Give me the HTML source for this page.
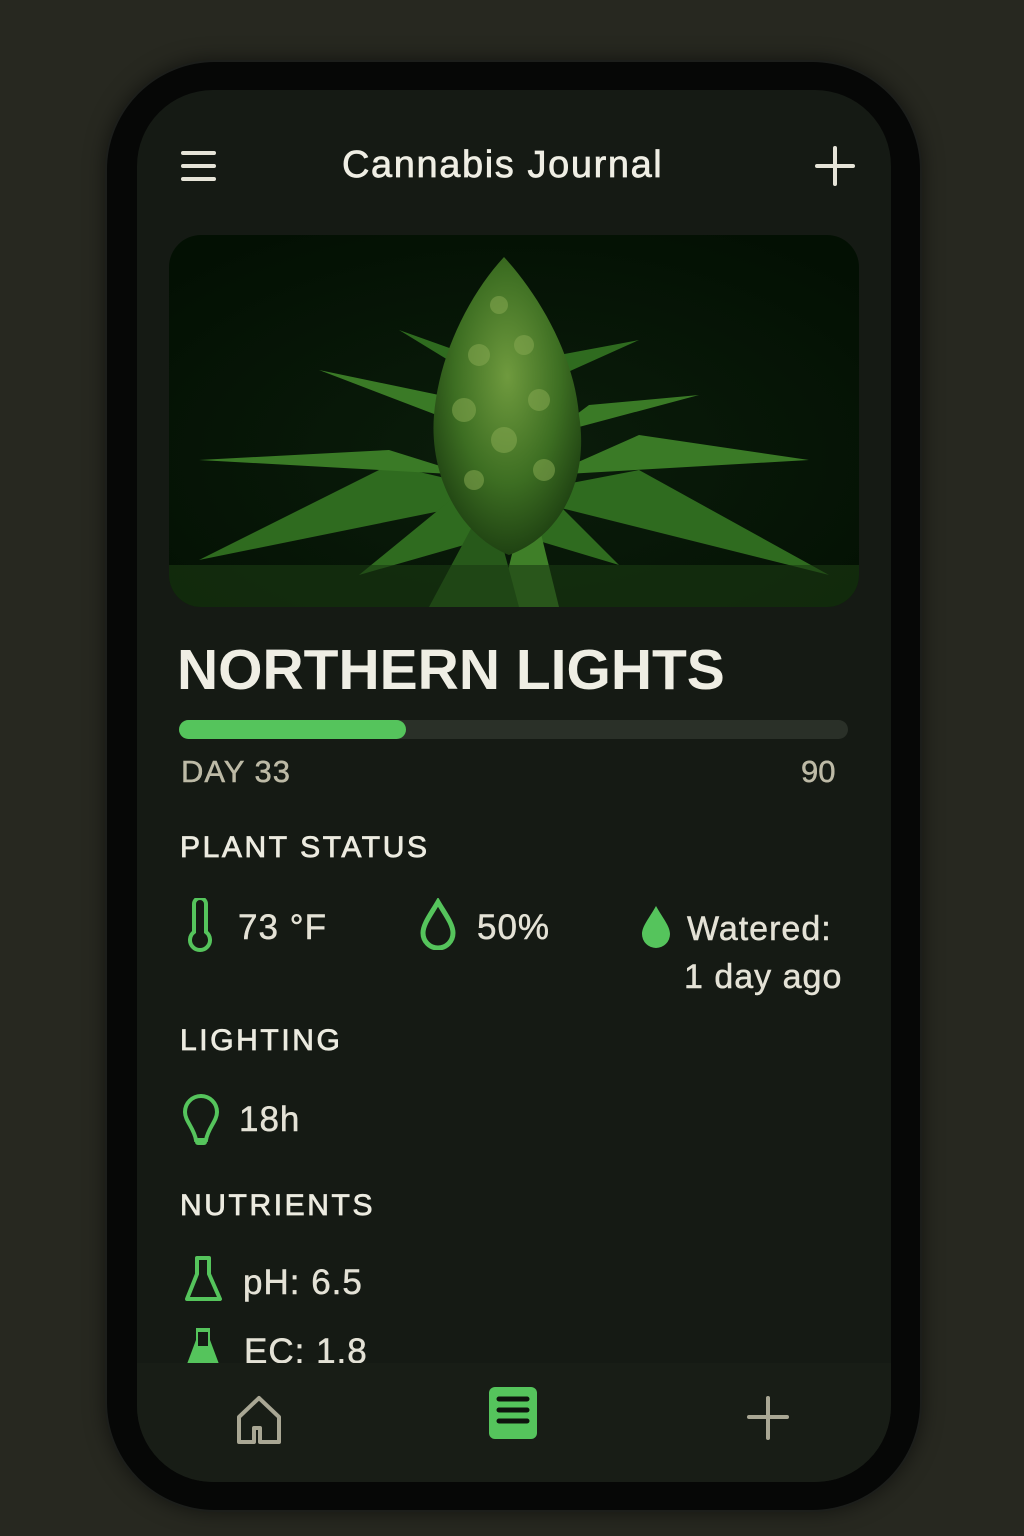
<!DOCTYPE html>
<html><head><meta charset="utf-8"><style>
*{margin:0;padding:0;box-sizing:border-box}
body{width:1024px;height:1536px;background:#272820;font-family:"Liberation Sans",sans-serif;position:relative;overflow:hidden}
.phone{position:absolute;left:105px;top:60px;width:817px;height:1452px;border-radius:110px;background:#060706;border:2px solid #1c1e1b;box-shadow:0 0 20px rgba(0,0,0,.5)}
.screen{position:absolute;left:137px;top:90px;width:754px;height:1392px;border-radius:76px;background:#151a14;overflow:hidden}
.t{position:absolute;color:#e9e8dc;white-space:nowrap}
.h{font-size:30px;letter-spacing:2.6px;color:#ecebe0;-webkit-text-stroke:.8px #ecebe0}
.v{font-size:35px;color:#e4e2d6;letter-spacing:1px;-webkit-text-stroke:.5px #e4e2d6}
.nav{position:absolute;left:0;top:1273px;width:754px;height:119px;background:#181d16}
</style></head><body>
<div class="phone"></div>
<div class="screen">
 <svg style="position:absolute;left:44px;top:60px" width="36" height="32"><g stroke="#e6e4d8" stroke-width="4" stroke-linecap="round"><line x1="2" y1="3" x2="33" y2="3"/><line x1="2" y1="16" x2="33" y2="16"/><line x1="2" y1="29" x2="33" y2="29"/></g></svg>
 <div class="t" style="left:205px;top:54px;font-size:38px;color:#efeee4;letter-spacing:1.6px;-webkit-text-stroke:.7px #efeee4">Cannabis Journal</div>
 <svg style="position:absolute;left:678px;top:56px" width="40" height="40"><g stroke="#e6e4d8" stroke-width="4" stroke-linecap="round"><line x1="20" y1="2" x2="20" y2="38"/><line x1="2" y1="20" x2="38" y2="20"/></g></svg>
 <svg style="position:absolute;left:32px;top:145px" width="690" height="372" viewBox="0 0 690 372">
  <defs><clipPath id="c"><rect width="690" height="372" rx="32"/></clipPath>
  <radialGradient id="bg" cx=".5" cy=".6" r=".7"><stop offset="0" stop-color="#0b1d0b"/><stop offset="1" stop-color="#031003"/></radialGradient>
  <radialGradient id="bud" cx=".5" cy=".4" r=".6"><stop offset="0" stop-color="#6f9a3e"/><stop offset=".6" stop-color="#3d6e22"/><stop offset="1" stop-color="#1f4212"/></radialGradient></defs>
  <g clip-path="url(#c)">
  <rect width="690" height="372" fill="url(#bg)"/>
  <g fill="#2f6b1f">
   <path d="M30 325 L220 230 L350 260 Z"/>
   <path d="M660 340 L470 235 L340 260 Z"/>
   <path d="M30 225 L220 215 L300 240 Z" fill="#3a7a26"/>
   <path d="M640 225 L470 200 L380 240 Z" fill="#3a7a26"/>
   <path d="M150 135 L270 160 L320 200 Z" fill="#3a7a26"/>
   <path d="M530 160 L420 170 L380 200 Z" fill="#3a7a26"/>
   <path d="M230 95 L300 120 L320 150 Z"/>
   <path d="M470 105 L390 120 L370 150 Z"/>
   <path d="M190 340 L300 250 L330 300 Z"/>
   <path d="M450 330 L380 260 L350 300 Z"/>
   <path d="M390 372 L360 250 L330 372 Z" fill="#3f7f28"/>
   <path d="M260 372 L320 260 L350 372 Z" fill="#27591a"/>
  </g>
  <path d="M335 22 C300 60 270 120 265 180 C260 240 290 300 340 320 C395 300 420 240 410 180 C405 120 370 60 335 22Z" fill="url(#bud)"/>
  <g fill="#86a851" opacity=".55"><circle cx="330" cy="70" r="9"/><circle cx="310" cy="120" r="11"/><circle cx="355" cy="110" r="10"/><circle cx="295" cy="175" r="12"/><circle cx="370" cy="165" r="11"/><circle cx="335" cy="205" r="13"/><circle cx="305" cy="245" r="10"/><circle cx="375" cy="235" r="11"/></g>
  <rect y="330" width="690" height="42" fill="#1b3a12" opacity=".6"/>
  </g>
 </svg>
 <div class="t" style="left:40px;top:547px;font-size:57px;font-weight:bold;color:#efeee4;letter-spacing:0">NORTHERN LIGHTS</div>
 <div style="position:absolute;left:42px;top:630px;width:669px;height:19px;border-radius:10px;background:#2a3028"></div>
 <div style="position:absolute;left:42px;top:630px;width:227px;height:19px;border-radius:10px;background:#55c45c"></div>
 <div class="t" style="left:44px;top:664px;font-size:31px;color:#bdbaa6;letter-spacing:1px;-webkit-text-stroke:.5px #bdbaa6">DAY 33</div>
 <div class="t" style="left:664px;top:664px;font-size:31px;color:#bdbaa6;-webkit-text-stroke:.5px #bdbaa6">90</div>
 <div class="t h" style="left:43px;top:741px">PLANT STATUS</div>
 <svg style="position:absolute;left:49px;top:808px" width="28" height="56"><path d="M8 6a6 6 0 0 1 12 0v28a10 10 0 1 1-12 0z" fill="none" stroke="#55c45c" stroke-width="4"/></svg>
 <div class="t v" style="left:101px;top:818px">73 °F</div>
 <svg style="position:absolute;left:282px;top:808px" width="38" height="52"><path d="M19 4C12 16 4 26 4 35a15 15 0 0 0 30 0C34 26 26 16 19 4z" fill="none" stroke="#55c45c" stroke-width="5"/></svg>
 <div class="t v" style="left:340px;top:818px">50%</div>
 <svg style="position:absolute;left:502px;top:814px" width="34" height="44"><path d="M17 2C11 13 3 22 3 30a14 14 0 0 0 28 0C31 22 23 13 17 2z" fill="#55c45c"/></svg>
 <div class="t v" style="left:550px;top:820px;font-size:34px">Watered:</div>
 <div class="t v" style="left:547px;top:868px;font-size:34px">1 day ago</div>
 <div class="t h" style="left:43px;top:934px">LIGHTING</div>
 <svg style="position:absolute;left:44px;top:1002px" width="40" height="56"><path d="M20 4a16 16 0 0 0-16 16c0 9 9 16 11 28h10c2-12 11-19 11-28A16 16 0 0 0 20 4z" fill="none" stroke="#55c45c" stroke-width="4"/><rect x="14" y="47" width="12" height="6" rx="3" fill="#55c45c"/></svg>
 <div class="t v" style="left:102px;top:1010px">18h</div>
 <div class="t h" style="left:43px;top:1099px">NUTRIENTS</div>
 <svg style="position:absolute;left:47px;top:1165px" width="40" height="50"><path d="M13 3h12v16l11 25H3l10-25z" fill="none" stroke="#55c45c" stroke-width="4" stroke-linejoin="round"/></svg>
 <div class="t v" style="left:106px;top:1173px">pH: 6.5</div>
 <svg style="position:absolute;left:47px;top:1236px" width="40" height="40"><path d="M12 2h14v12l9 24H3l9-24z" fill="#55c45c"/><rect x="14" y="6" width="10" height="14" fill="#151a14"/></svg>
 <div class="t v" style="left:107px;top:1242px">EC: 1.8</div>
 <div class="nav">
  <svg style="position:absolute;left:98px;top:32px" width="48" height="50"><path d="M24 3L4 22v25h15V33h6v14h19V22z" fill="none" stroke="#a9a794" stroke-width="4" stroke-linejoin="round"/></svg>
  <svg style="position:absolute;left:351px;top:23px" width="50" height="54"><rect x="1" y="1" width="48" height="52" rx="6" fill="#55c45c"/><g stroke="#0e130d" stroke-width="5" stroke-linecap="round"><line x1="11" y1="13" x2="39" y2="13"/><line x1="11" y1="24" x2="39" y2="24"/><line x1="11" y1="35" x2="39" y2="35"/></g></svg>
  <svg style="position:absolute;left:610px;top:33px" width="42" height="44"><g stroke="#a9a794" stroke-width="4" stroke-linecap="round"><line x1="21" y1="2" x2="21" y2="42"/><line x1="2" y1="21" x2="40" y2="21"/></g></svg>
 </div>
</div>
</body></html>
